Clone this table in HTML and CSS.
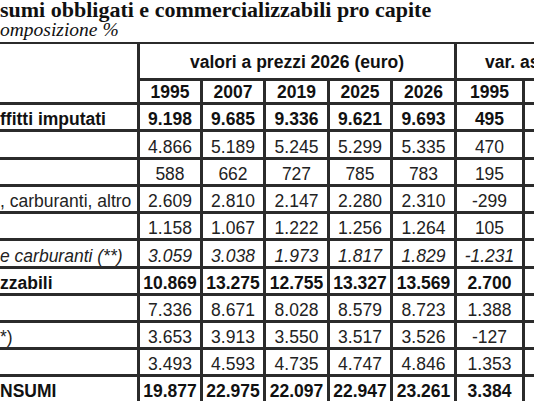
FILE: index.html
```html
<!DOCTYPE html>
<html lang="it">
<head>
<meta charset="utf-8">
<title>Consumi obbligati e commercializzabili pro capite</title>
<link rel="stylesheet" href="styles.css">
</head>
<body>
<div class="page">
  <div class="title">
    <div class="title-main">sumi obbligati e commercializzabili pro capite</div>
    <div class="title-sub">omposizione %</div>
  </div>
  <div class="grid">
    <div class="c lab rspan2"></div>
    <div class="c grp b span5">valori a prezzi 2026 (euro)</div>
    <div class="c grp var b span2">var. assolute</div>

    <div class="c b">1995</div><div class="c b">2007</div><div class="c b">2019</div><div class="c b">2025</div><div class="c b">2026</div><div class="c b">1995</div><div class="c b"></div>

    <div class="c lab b">ffitti imputati</div>
    <div class="c b">9.198</div><div class="c b">9.685</div><div class="c b">9.336</div><div class="c b">9.621</div><div class="c b">9.693</div><div class="c b">495</div><div class="c"></div>

    <div class="c lab"></div>
    <div class="c">4.866</div><div class="c">5.189</div><div class="c">5.245</div><div class="c">5.299</div><div class="c">5.335</div><div class="c">470</div><div class="c"></div>

    <div class="c lab"></div>
    <div class="c">588</div><div class="c">662</div><div class="c">727</div><div class="c">785</div><div class="c">783</div><div class="c">195</div><div class="c"></div>

    <div class="c lab">, carburanti, altro</div>
    <div class="c">2.609</div><div class="c">2.810</div><div class="c">2.147</div><div class="c">2.280</div><div class="c">2.310</div><div class="c">-299</div><div class="c"></div>

    <div class="c lab"></div>
    <div class="c">1.158</div><div class="c">1.067</div><div class="c">1.222</div><div class="c">1.256</div><div class="c">1.264</div><div class="c">105</div><div class="c"></div>

    <div class="c lab i">e carburanti (**)</div>
    <div class="c i">3.059</div><div class="c i">3.038</div><div class="c i">1.973</div><div class="c i">1.817</div><div class="c i">1.829</div><div class="c i">-1.231</div><div class="c"></div>

    <div class="c lab b">zzabili</div>
    <div class="c b">10.869</div><div class="c b">13.275</div><div class="c b">12.755</div><div class="c b">13.327</div><div class="c b">13.569</div><div class="c b">2.700</div><div class="c"></div>

    <div class="c lab"></div>
    <div class="c">7.336</div><div class="c">8.671</div><div class="c">8.028</div><div class="c">8.579</div><div class="c">8.723</div><div class="c">1.388</div><div class="c"></div>

    <div class="c lab">*)</div>
    <div class="c">3.653</div><div class="c">3.913</div><div class="c">3.550</div><div class="c">3.517</div><div class="c">3.526</div><div class="c">-127</div><div class="c"></div>

    <div class="c lab"></div>
    <div class="c">3.493</div><div class="c">4.593</div><div class="c">4.735</div><div class="c">4.747</div><div class="c">4.846</div><div class="c">1.353</div><div class="c"></div>

    <div class="c lab b">NSUMI</div>
    <div class="c b">19.877</div><div class="c b">22.975</div><div class="c b">22.097</div><div class="c b">22.947</div><div class="c b">23.261</div><div class="c b">3.384</div><div class="c"></div>
  </div>
</div>
</body>
</html>
```

FILE: styles.css
```css
html, body {
  margin: 0;
  padding: 0;
  background: #fff;
}

.page {
  width: 534px;
  height: 404px;
  overflow: hidden;
}

.title {
  height: 42px;
  font-family: "Liberation Serif", "Times New Roman", serif;
  color: #111;
  white-space: nowrap;
}

.title-main {
  font-weight: bold;
  font-size: 22px;
  line-height: 20px;
}

.title-sub {
  font-style: italic;
  font-size: 19.5px;
  line-height: 19px;
}

.grid {
  display: grid;
  width: max-content;
  grid-template-columns: 137px 60px 60px 61px 60px 61px 65px 80px;
  grid-template-rows: 34px 21px 24px 25px 24px 24px 24px 25px 24px 24px 24px 24px 24px;
  gap: 3px;
  padding-top: 2px;
  background: #2b2b2b;
}

.c {
  background: #fff;
  display: flex;
  align-items: flex-end;
  justify-content: center;
  font-family: "Liberation Sans", Arial, sans-serif;
  font-size: 17.5px;
  line-height: 19px;
  color: #222;
  white-space: nowrap;
  overflow: hidden;
}

.lab {
  justify-content: flex-start;
  padding-left: 0;
}

.grp {
  align-items: center;
  padding-top: 2px;
}

.var {
  justify-content: flex-start;
  padding-left: 28px;
}

.b {
  font-weight: bold;
  color: #111;
}

.i {
  font-style: italic;
}

.span5 {
  grid-column: span 5;
}

.span2 {
  grid-column: span 2;
}

.rspan2 {
  grid-row: span 2;
}
```
